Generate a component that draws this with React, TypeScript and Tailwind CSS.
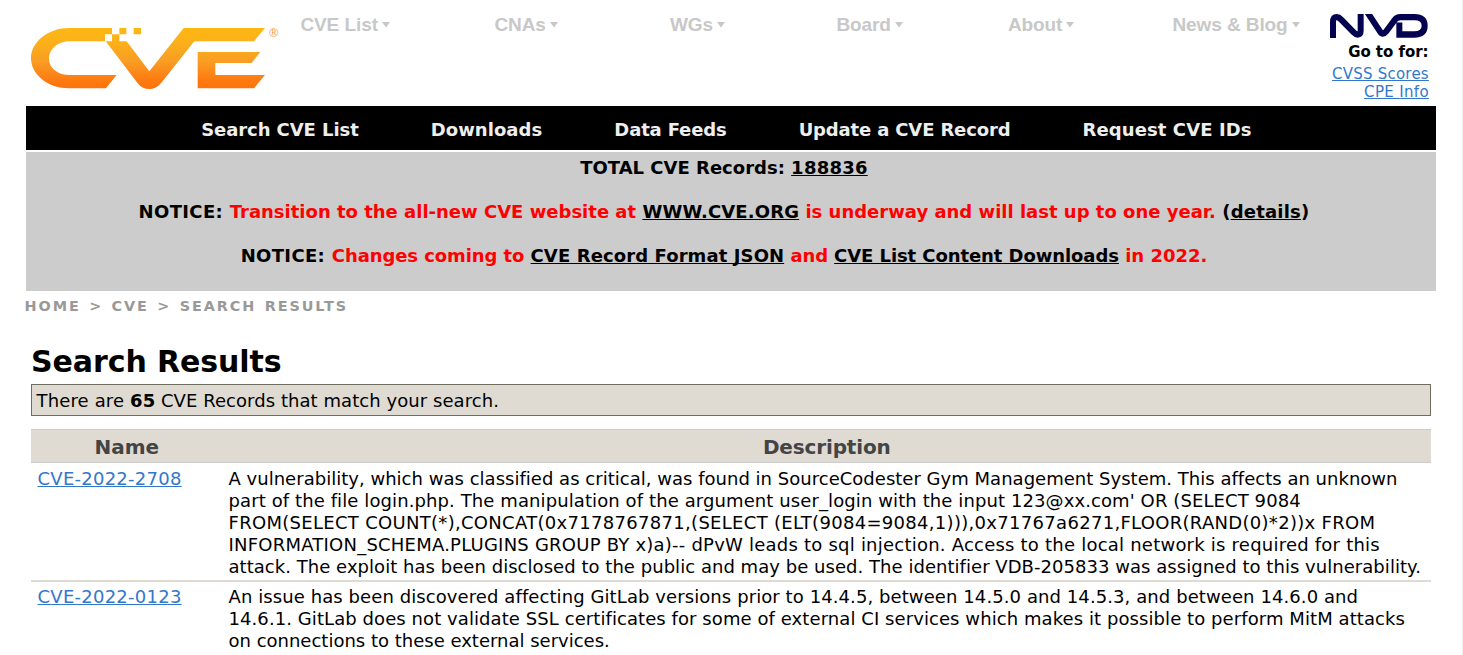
import React from "react";

const menu = [
  { label: "CVE List", width: "w-[194px]" },
  { label: "CNAs", width: "w-[175.5px]" },
  { label: "WGs", width: "w-[166.5px]" },
  { label: "Board", width: "w-[171.5px]" },
  { label: "About", width: "w-[164.5px]" },
  { label: "News & Blog", width: "w-[139.5px]" },
];

const nav = [
  { label: "Search CVE List", spacing: "tracking-[-0.075px]" },
  { label: "Downloads", spacing: "tracking-[0.05px]" },
  { label: "Data Feeds", spacing: "tracking-[-0.15px]" },
  { label: "Update a CVE Record", spacing: "tracking-[-0.15px]" },
  { label: "Request CVE IDs", spacing: "tracking-[0.1px]" },
];

const records = [
  {
    id: "CVE-2022-2708",
    lines: [
      { text: "A vulnerability, which was classified as critical, was found in SourceCodester Gym Management System. This affects an unknown", spacing: "tracking-[0.02px]" },
      { text: "part of the file login.php. The manipulation of the argument user_login with the input 123@xx.com' OR (SELECT 9084", spacing: "tracking-[0.1px]" },
      { text: "FROM(SELECT COUNT(*),CONCAT(0x7178767871,(SELECT (ELT(9084=9084,1))),0x71767a6271,FLOOR(RAND(0)*2))x FROM", spacing: "tracking-[0.3px]" },
      { text: "INFORMATION_SCHEMA.PLUGINS GROUP BY x)a)-- dPvW leads to sql injection. Access to the local network is required for this", spacing: "tracking-[0.225px]" },
      { text: "attack. The exploit has been disclosed to the public and may be used. The identifier VDB-205833 was assigned to this vulnerability.", spacing: "tracking-[0.04px]" },
    ],
  },
  {
    id: "CVE-2022-0123",
    lines: [
      { text: "An issue has been discovered affecting GitLab versions prior to 14.4.5, between 14.5.0 and 14.5.3, and between 14.6.0 and", spacing: "tracking-[0.087px]" },
      { text: "14.6.1. GitLab does not validate SSL certificates for some of external CI services which makes it possible to perform MitM attacks", spacing: "tracking-[0.077px]" },
      { text: "on connections to these external services.", spacing: "tracking-normal" },
    ],
  },
];

const underlined = "underline decoration-1 underline-offset-1 [text-decoration-skip-ink:none]";

function CveLogo() {
  return (
    <svg className="block h-[100px] w-[270px] shrink-0" viewBox="0 0 810 300" role="img" aria-label="CVE">
      <defs>
        <linearGradient id="cve-orange" gradientUnits="userSpaceOnUse" x1="0" y1="54" x2="0" y2="236">
          <stop offset="0" stopColor="#fdb813" />
          <stop offset="0.25" stopColor="#fbb01b" />
          <stop offset="0.55" stopColor="#f99d24" />
          <stop offset="0.85" stopColor="#fd7c12" />
          <stop offset="1" stopColor="#ff720b" />
        </linearGradient>
      </defs>
      <g fill="url(#cve-orange)">
        <path d="M147 54H276V73H255V94H150C115 94 87 116 87 146C87 175 115 195 150 195H290L258 235H147C85 235 33 195 33 145C33 95 85 54 147 54Z" />
        <path d="M276 73H298V94H320L388 184L491 54H735L702 94H523L424 218Q408 237 388 237Q366 237 352 218L257 94H276Z" />
        <path d="M298 54H319V73H298ZM341 54H363V73H341Z" />
        <path d="M533 126H721L695 159H586V195H735L702 235H533Z" />
      </g>
      <text x="761" y="82" textAnchor="middle" className="fill-[#f9a04a] font-['DejaVu_Sans',sans-serif] text-[36px]">®</text>
    </svg>
  );
}

function NvdLogo() {
  return (
    <svg className="mr-[-0.5px] block h-[24px] w-[100px] overflow-hidden" viewBox="30 29 300 68" preserveAspectRatio="none" role="img" aria-label="NVD">
      <g fill="none" stroke="#03034f" strokeWidth="18">
        <path d="M42 97V52Q42 38 53 38Q60 38 67 45L103 80Q110 87 116 87Q125 87 125 76V29" />
        <path d="M145 24L182 77Q191 91 202 78L227 46Q233 38 244 38H286Q317 38 317 62.5Q317 87 286 87H241V53" />
      </g>
    </svg>
  );
}

export default function App() {
  return (
    <div className="h-[655px] w-[1463px] overflow-hidden border-r border-[#f0f0f0] bg-white font-['DejaVu_Sans',sans-serif] text-[18px] leading-[22px] text-black">
      <header className="flex h-[106px]">
        <div className="w-[300.4px] shrink-0 overflow-hidden pt-[10px] pl-[20px]">
          <CveLogo />
        </div>
        <ul className="flex pt-[14px] font-['Liberation_Sans',sans-serif] text-[19px] font-bold text-[#c8c8c8]">
          {menu.map((item) => (
            <li key={item.label} className={"flex h-[22px] shrink-0 gap-1 whitespace-nowrap " + item.width}>
              <span className="tracking-[-0.08px]">{item.label}</span>
              <svg className="mt-[8px] h-[6px] w-[8px]" viewBox="0 0 8 6" fill="currentColor">
                <path d="M0 0H8L4 5.5Z" />
              </svg>
            </li>
          ))}
        </ul>
        <div className="flex w-[117px] shrink-0 flex-col items-end pt-[14px] text-[15px] leading-[18px]">
          <NvdLogo />
          <div className="mt-[5px] mr-[0.4px] font-bold tracking-[-0.04px]">Go to for:</div>
          <a className={"mt-[4px] tracking-[0.23px] text-[#3377cc] " + underlined}>CVSS Scores</a>
          <a className={"tracking-[0.33px] text-[#3377cc] " + underlined}>CPE Info</a>
        </div>
      </header>

      <nav className="mr-[26px] ml-[26px] flex h-[44px] gap-[72.1px] bg-black pt-[13px] pl-[175.2px] font-bold whitespace-nowrap text-[#eeeeee]">
        {nav.map((item) => (
          <a key={item.label} className={item.spacing}>{item.label}</a>
        ))}
      </nav>

      <section className="mx-[26px] mt-[2px] flex h-[139px] flex-col gap-[22px] bg-[#cccccc] pt-[5px] pr-[14px] text-center font-bold whitespace-pre">
        <p>
          TOTAL CVE Records: <a className={"tracking-[0.25px] " + underlined}>188836</a>
        </p>
        <p>
          <span className="tracking-[0.35px]">NOTICE: </span>
          <span className="text-[#ff0000]">Transition to the all-new CVE website at </span>
          <a className={"tracking-[0.15px] " + underlined}>WWW.CVE.ORG</a>
          <span className="text-[#ff0000]"> is underway and will last up to one year. </span>
          <span className="tracking-[0.2px]">(<a className={underlined}>details</a>)</span>
        </p>
        <p>
          <span className="tracking-[0.35px]">NOTICE: </span>
          <span className="tracking-[-0.08px] text-[#ff0000]">Changes coming to </span>
          <a className={"tracking-[0.1px] " + underlined}>CVE Record Format JSON</a>
          <span className="tracking-[-0.1px] text-[#ff0000]"> and </span>
          <a className={"tracking-[-0.08px] " + underlined}>CVE List Content Downloads</a>
          <span className="text-[#ff0000]"> in 2022.</span>
        </p>
      </section>

      <div className="mt-[4px] pl-[24.6px] text-[14.4px] font-bold tracking-[1.92px] whitespace-nowrap text-[#999999] [word-spacing:1.5px]">
        HOME &gt; CVE &gt; SEARCH RESULTS
      </div>

      <main className="mr-[31px] ml-[31px] pt-[27px]">
        <h1 className="h-[40px] text-[30px] leading-[36px] font-bold tracking-[-0.08px]">Search Results</h1>
        <div className="h-[32px] border border-[#6e6d5f] bg-[#dfdbd3] pt-[5px] pl-[4.5px] whitespace-pre">
          <span className="tracking-[0.15px]">There are </span>
          <b>65</b>
          <span className="tracking-[0.06px]"> CVE Records that match your search.</span>
        </div>

        <div className="mt-[13px]">
          <div className="flex h-[34px] border-y border-[#cccccc] bg-[#dfdbd3] pt-[5px] text-center text-[20px] leading-[24px] font-bold text-[#444444]">
            <div className="w-[191.5px] shrink-0">Name</div>
            <div className="grow tracking-[-0.15px]">Description</div>
          </div>
          {records.map((record) => (
            <div key={record.id} className="flex border-b-2 border-[#dfdbd3] pt-[5px] pb-[2px] whitespace-nowrap last:border-b-0 not-first:last:pt-[4px]">
              <div className="w-[191.5px] shrink-0 pl-[6.5px]">
                <a className={"tracking-[0.25px] text-[#3377cc] " + underlined}>{record.id}</a>
              </div>
              <div className="pl-[6px]">
                {record.lines.map((line) => (
                  <div key={line.text} className={line.spacing}>{line.text}</div>
                ))}
              </div>
            </div>
          ))}
        </div>
      </main>
    </div>
  );
}
